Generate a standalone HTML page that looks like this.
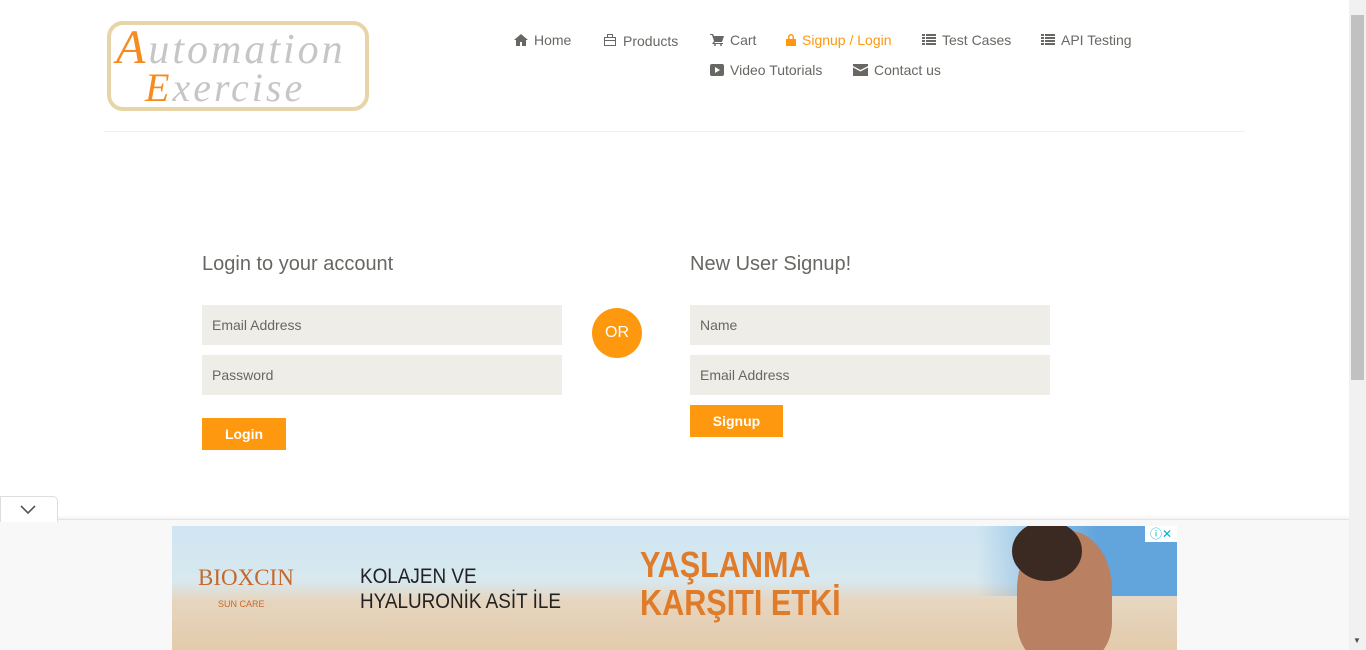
<!DOCTYPE html>
<html><head><meta charset="utf-8"><style>
*{margin:0;padding:0;box-sizing:border-box}
body{width:1366px;height:650px;overflow:hidden;background:#fff;font-family:"Liberation Sans",Arial,sans-serif;position:relative;color:#696763}
.abs{position:absolute}
.nav{font-size:14px;color:#696763;white-space:nowrap}
.nav svg{vertical-align:-1px;margin-right:6px;fill:#696763}
h2{font-weight:normal;font-size:20px;color:#696763}
.inp{position:absolute;background:#eeede7;height:40px;width:360px;font-size:14px;color:#696763;padding:12px 10px;line-height:16px}
.btn{position:absolute;background:#fe980f;color:#fff;font-size:14px;font-weight:bold;text-align:center;line-height:32px;height:32px}
</style></head><body>
<div class="abs" style="left:107px;top:21px;width:262px;height:90px;border:4px solid #e8d5a7;border-radius:16px;background:#fff"></div>
<div class="abs" style="left:116px;top:26px;font-family:'Liberation Serif',serif;font-style:italic;font-size:42px;color:#c6c6c6;line-height:44px;letter-spacing:3px"><span style="color:#f68b1f;font-size:48px">A</span>utomation</div>
<div class="abs" style="left:145px;top:66px;font-family:'Liberation Serif',serif;font-style:italic;font-size:40px;color:#c6c6c6;line-height:44px;letter-spacing:3px"><span style="color:#f68b1f">E</span>xercise</div>

<div class="abs nav" style="left:514px;top:32px"><svg width="14" height="12" viewBox="0 0 14 12"><path d="M7 0L0 6h2v6h4V8h2v4h4V6h2z"/></svg>Home</div>
<div class="abs nav" style="left:603px;top:33px"><svg width="14" height="14" viewBox="0 0 14 14"><path d="M4 1h6v3h3v9H1V4h3zM5 2v2h4V2zM2 5v2h10V5zM2 8v4h10V8z"/></svg>Products</div>
<div class="abs nav" style="left:710px;top:32px"><svg width="14" height="12" viewBox="0 0 14 12"><path d="M0 0h3l1 2h10l-2 6H5l-1 1h9v1H2l2-3L2 1H0z"/><circle cx="5" cy="11" r="1"/><circle cx="11" cy="11" r="1"/></svg>Cart</div>
<div class="abs nav" style="left:786px;top:32px;color:#fe980f"><svg width="10" height="13" viewBox="0 0 10 13" style="fill:#fe980f"><path d="M2 6V4a3 3 0 016 0v2h2v7H0V6zm1.5 0h3V4a1.5 1.5 0 00-3 0z"/></svg>Signup / Login</div>
<div class="abs nav" style="left:922px;top:32px"><svg width="14" height="12" viewBox="0 0 14 12"><path d="M0 0h3v2H0zM4 0h10v2H4zM0 3h3v2H0zM4 3h10v2H4zM0 6h3v2H0zM4 6h10v2H4zM0 9h3v2H0zM4 9h10v2H4z"/></svg>Test Cases</div>
<div class="abs nav" style="left:1041px;top:32px"><svg width="14" height="12" viewBox="0 0 14 12"><path d="M0 0h3v2H0zM4 0h10v2H4zM0 3h3v2H0zM4 3h10v2H4zM0 6h3v2H0zM4 6h10v2H4zM0 9h3v2H0zM4 9h10v2H4z"/></svg>API Testing</div>
<div class="abs nav" style="left:710px;top:62px"><svg width="14" height="12" viewBox="0 0 14 12"><rect width="14" height="12" rx="2"/><path d="M5 3l5 3-5 3z" fill="#fff"/></svg>Video Tutorials</div>
<div class="abs nav" style="left:853px;top:62px"><svg width="15" height="12" viewBox="0 0 15 12"><path d="M0 0h15v2L7.5 6 0 2zM0 3.5l7.5 4 7.5-4V12H0z"/></svg>Contact us</div>

<div class="abs" style="left:104px;top:131px;width:1141px;height:1px;background:#f0f0ea"></div>

<h2 class="abs" style="left:202px;top:253px">Login to your account</h2>
<div class="inp" style="left:202px;top:305px">Email Address</div>
<div class="inp" style="left:202px;top:355px">Password</div>
<div class="btn" style="left:202px;top:418px;width:84px">Login</div>
<div class="abs" style="left:592px;top:308px;width:50px;height:50px;border-radius:50%;background:#fe980f;color:#fff;font-size:16px;text-align:center;line-height:50px">OR</div>
<h2 class="abs" style="left:690px;top:253px">New User Signup!</h2>
<div class="inp" style="left:690px;top:305px">Name</div>
<div class="inp" style="left:690px;top:355px">Email Address</div>
<div class="btn" style="left:690px;top:405px;width:93px">Signup</div>

<div class="abs" style="left:0;top:519px;width:1349px;height:131px;background:#f8f8f8;border-top:1px solid #e4e4e4;box-shadow:0 -2px 3px rgba(0,0,0,.05)"></div>
<div class="abs" style="left:0;top:496px;width:58px;height:26px;background:#fff;border:1px solid #ddd;border-bottom:none;border-radius:0 5px 0 0"></div>
<svg class="abs" style="left:20px;top:505px" width="16" height="10" viewBox="0 0 16 10"><path d="M1 1l7 7 7-7" stroke="#555" stroke-width="1.6" fill="none"/></svg>
<div class="abs" style="left:172px;top:526px;width:1005px;height:124px;overflow:hidden;background:linear-gradient(180deg,#cfe6f2 0%,#d8e8ee 45%,#e6d5bf 60%,#e3cbac 100%)">
<div class="abs" style="right:0;top:0;width:200px;height:70px;background:linear-gradient(90deg,rgba(100,165,220,0),#62a4dc 60%)"></div>
<div class="abs" style="left:845px;top:5px;width:95px;height:130px;border-radius:45% 45% 30% 30%;background:#b98062"></div>
<div class="abs" style="left:840px;top:-5px;width:70px;height:60px;border-radius:50%;background:#3a2a22"></div>
<div class="abs" style="left:26px;top:39px;font-family:'Liberation Serif',serif;font-size:23px;color:#c7682a">BIOXCIN</div>
<div class="abs" style="left:46px;top:73px;font-size:9px;color:#c7682a">SUN CARE</div>
<div class="abs" style="left:188px;top:38px;font-size:21px;line-height:25px;color:#222;transform:scaleX(.9);transform-origin:left">KOLAJEN VE<br>HYALURONİK ASİT İLE</div>
<div class="abs" style="left:468px;top:20px;font-size:36px;line-height:38px;font-weight:bold;color:#e07b2a;transform:scaleX(.85);transform-origin:left">YAŞLANMA<br>KARŞITI ETKİ</div>
<div class="abs" style="right:0;top:0;width:32px;height:16px;background:#fff;font-size:12px;color:#00aecd;line-height:16px;text-align:center">ⓘ✕</div>
</div>
<div class="abs" style="left:1349px;top:0;width:17px;height:650px;background:#f1f1f1"></div>
<div class="abs" style="left:1351px;top:15px;width:13px;height:365px;background:#c1c1c1"></div>
<div class="abs" style="left:1353px;top:636px;font-size:8px;color:#505050">▼</div>
</body></html>
